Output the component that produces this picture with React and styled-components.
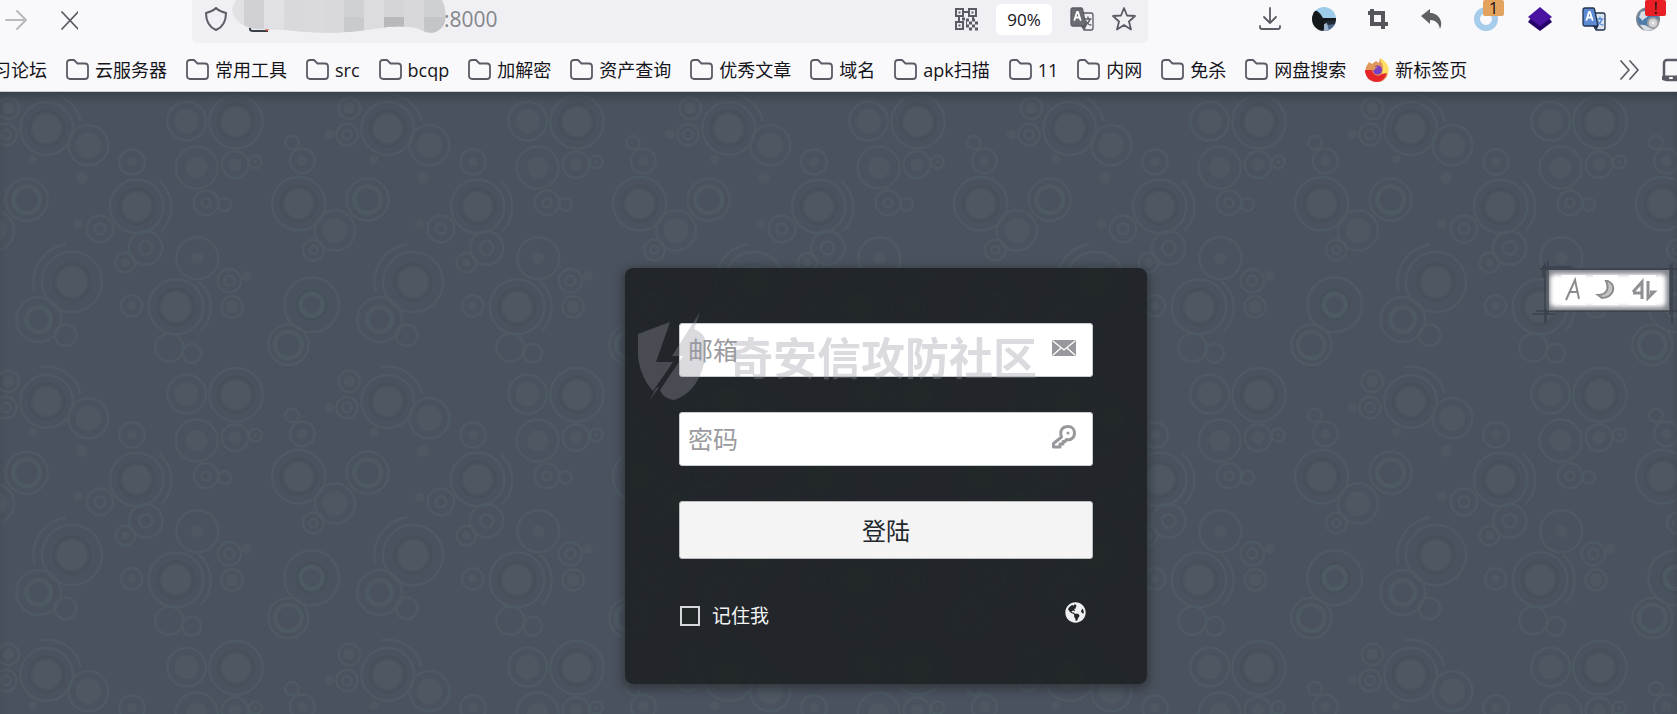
import React from "react";
import styled, { createGlobalStyle } from "styled-components";
import { FaGlobeAmericas } from "react-icons/fa";

const Global = createGlobalStyle`
  *{box-sizing:border-box}
  body{margin:0;font-family:"Open Sans","Noto Sans CJK SC",sans-serif;background:#48515d}
  button,input{font-family:inherit}
  button{padding:0;border:0;background:none;cursor:pointer}
`;

const Window = styled.div`
  min-height: 100vh;
  display: flex;
  flex-direction: column;
  overflow: hidden;
  border-bottom: 1px solid #14161c;
`;
const Chrome = styled.header`
  background: #f9f9fb;
  border-bottom: 1px solid #c9ced3;
  position: relative;
`;
const Toolbar = styled.div`
  display: flex;
  align-items: flex-start;
  padding-right: 17px;
`;
const NavGroup = styled.div`
  display: flex;
  align-items: center;
  gap: 26px;
  height: 40px;
  width: 192px;
  padding-left: 4px;
  flex: none;
`;
const IconButton = styled.button`
  position: relative;
  display: flex;
  flex: none;
  width: 24px;
  height: 24px;
  svg { display: block; }
`;
const AddressBar = styled.div`
  flex: 1;
  min-width: 0;
  display: flex;
  align-items: center;
  height: 43px;
  padding: 0 12px 5px;
  background: #f0f0f4;
  border-radius: 0 0 5px 5px;
`;
const Mosaic = styled.svg`
  flex: none;
  margin-left: 4px;
`;
const AddressInput = styled.input`
  flex: 1;
  min-width: 0;
  margin-left: -3px;
  padding: 0;
  border: 0;
  outline: 0;
  background: none;
  font-size: 21px;
  line-height: 28px;
  color: #85858b;
`;
const AddressActions = styled.div`
  display: flex;
  align-items: center;
  gap: 18px;
`;
const Zoom = styled.button`
  width: 56px;
  height: 31px;
  border-radius: 5px;
  background: #fff;
  font-size: 17px;
  color: #15141a;
`;
const Extensions = styled.div`
  display: flex;
  align-items: center;
  gap: 30px;
  height: 38px;
  margin-left: 110px;
`;
const Badge = styled.span`
  position: absolute;
  left: 9px;
  top: -7px;
  width: 21px;
  height: 16px;
  border-radius: 2px;
  background: ${(p) => p.$color};
  color: #111;
  font-size: 16px;
  line-height: 16px;
  text-align: center;
`;
const Bookmarks = styled.nav`
  display: flex;
  align-items: center;
  height: 48px;
  padding-top: 6px;
`;
const BookmarkList = styled.div`
  display: flex;
  flex: 1;
  min-width: 0;
  gap: 19px;
  overflow: hidden;
  margin-left: -36px;
`;
const Bookmark = styled.a`
  display: flex;
  align-items: center;
  gap: 6px;
  flex: none;
  font-size: 18px;
  line-height: 28px;
  color: #15141a;
  text-decoration: none;
  white-space: nowrap;
`;
const Overflow = styled.div`
  display: flex;
  gap: 20px;
  flex: none;
  margin-right: -9px;
`;

const Page = styled.main`
  position: relative;
  flex: 1;
  display: flex;
  justify-content: center;
  align-items: flex-start;
  padding: 176px 0 30px 95px;
  box-shadow: inset 0 8px 8px -4px #363e49;
`;
const Backdrop = styled.svg`
  position: absolute;
  inset: 0;
  width: 100%;
  height: 100%;
  z-index: -1;
`;
const Card = styled.form`
  position: relative;
  width: 522px;
  display: flex;
  flex-direction: column;
  padding: 55px 54px 56px;
  border-radius: 8px;
  background: rgba(27, 31, 33, 0.85);
  box-shadow: 0 3px 10px 2px rgba(45, 47, 50, 0.75);
`;
const Field = styled.label`
  display: flex;
  align-items: center;
  height: 54px;
  margin-bottom: 35px;
  padding: 0 16px 4px 8px;
  background: #fff;
  border: 1px solid #c9cdd0;
  border-radius: 3px;
`;
const FieldInput = styled.input`
  flex: 1;
  min-width: 0;
  padding: 4px 0 0;
  border: 0;
  outline: 0;
  background: none;
  font-size: 25px;
  line-height: 36px;
  color: #333;
  &::placeholder { color: #9b9b9f; opacity: 1; }
`;
const Submit = styled.button`
  height: 58px;
  padding-bottom: 2px;
  border: 1px solid #b9bcbe;
  border-radius: 3px;
  background: #f4f4f5;
  font-size: 24px;
  color: #23282c;
`;
const Footer = styled.div`
  display: flex;
  justify-content: space-between;
  align-items: center;
  margin-top: 39px;
  padding: 0 7px 0 1px;
`;
const Remember = styled.label`
  display: flex;
  align-items: center;
  gap: 12px;
  padding-top: 6px;
  font-size: 19px;
  line-height: 24px;
  color: #f5f5f6;
`;
const Checkbox = styled.input`
  appearance: none;
  width: 20px;
  height: 20px;
  margin: 0;
  border: 2px solid #d6d7da;
  background: #22272a;
`;
const Language = styled.button`
  display: flex;
  padding-bottom: 2px;
  font-size: 21px;
  color: #f0f0f3;
`;
const Watermark = styled.div`
  position: absolute;
  left: 12px;
  top: 44px;
  display: flex;
  align-items: center;
  gap: 22px;
  pointer-events: none;
  color: #9494a2;
  opacity: 0.34;
  font: 700 44px/88px "Noto Sans CJK SC", sans-serif;
  white-space: nowrap;
`;
const ImeBar = styled.svg`
  position: absolute;
  right: 2px;
  top: 169px;
  overflow: visible;
`;

const Icon = ({ children, box = "0 0 24 24", w = 24, h = 24 }) => (
  <svg width={w} height={h} viewBox={box} fill="none" stroke="#5b5b66" strokeWidth="2" strokeLinecap="round" strokeLinejoin="round" aria-hidden="true">
    {children}
  </svg>
);
const Folder = () => (
  <Icon w={23} h={22} box="0 0 23 22">
    <path d="M1 17V4a3 3 0 0 1 3-3h4l3.500 3.500H19a3 3 0 0 1 3 3V17a3 3 0 0 1-3 3H4a3 3 0 0 1-3-3Z" strokeWidth="1.800" />
  </Icon>
);
const Firefox = () => (
  <svg width="24" height="24" viewBox="0 0 24 24" aria-hidden="true">
    <path d="M1 9 4 4l3 2 4-3 3 2 1-5 6 6c5 8 1 18-9 18C4 24-1 18 1 9Z" fill="#e0985a" />
    <path d="M15 0c0 4 3 5 3 10l-1 6 5 1c4-7 0-13-7-17Z" fill="#ffdf63" />
    <path d="M0 12h7c1 6 7 7 10 4l5-1c-2 6-6 9-10 9C5 24 0 19 0 12Z" fill="#e5252a" />
    <circle cx="12.500" cy="12" r="4.600" fill="#7b3fc4" />
    <path d="M6 9c3-1 5 0 7 0-2 1-4 2-4 4Z" fill="#e0985a" />
  </svg>
);
const Translate = ({ front = "#6b6c72", back = "#fff", line = "#5b5b66", glyph = line }) => (
  <Icon>
    <path d="M13 6h8q2 0 2 2v13q0 2-2 2h-7l-3-5Z" fill={back} stroke={line} strokeWidth="1.300" />
    <path d="M15 12h6m-3-2v2m2 0c-1 4-3 5-5 6m1-4c1 2 3 4 5 4" stroke={glyph} strokeWidth="1.300" />
    <path d="M3 1h8q1 0 1.500 1L16 19H3q-2 0-2-2V3q0-2 2-2Z" fill={front} stroke={line} strokeWidth="1.300" />
    <path d="m4.500 13 2.500-8h1l2.500 8M6 10.500h3.500" stroke="#fff" strokeWidth="1.800" />
    <path d="m11 19 4 4 1-4Z" fill={line} stroke="none" />
  </Icon>
);
const Qr = () => (
  <Icon>
    <g strokeLinejoin="miter" strokeLinecap="butt">
      <path d="M2 2h7v7H2ZM15 2h7v7h-7ZM2 15h7v7H2Z" />
      <path d="M4.500 5.500h2M17.500 5.500h2M4.500 18.500h2M9 5h6M5 9v6M19 9v4" />
      <path d="M12 13h3m3 0h3M15 16h3m3 0h3M12 19h3m3 0h3M15 22h3m3 0h3M12 16h1M8 12h3" strokeWidth="3" />
    </g>
  </Icon>
);
const Envelope = () => (
  <svg width="24" height="16" viewBox="0 0 24 16" aria-hidden="true">
    <rect width="24" height="16" rx="1.500" fill="#98989c" />
    <path d="m1 1 11 9L23 1M1 15l8-7m14 7-8-7" fill="none" stroke="#fff" strokeWidth="1.300" />
  </svg>
);
const Key = () => (
  <svg width="24" height="24" viewBox="0 0 24 24" fill="none" stroke="#98989c" strokeWidth="3" strokeLinejoin="round" aria-hidden="true">
    <path d="M9.500 12C7 5 11 1.500 16 1.500c4 0 6.500 3 6.500 6.500 0 5-4 7.500-8 6.500l-1.500 2h-2V19H8v3H1.500v-3.500Z" />
    <circle cx="16" cy="8" r="1.500" fill="#98989c" stroke="none" />
  </svg>
);

/* Rings: x, y, outer ring, core radius, core kind (f filled, o open), optional arc */
const BUBBLES = [
  [140, 115, 79, 43, "f", "tr"], [265, 165, 60, 38, "f"], [25, 55, 32, 17, "f"], [18, 133, 32, 14, "o"],
  [98, 207, 0, 13, "f"], [246, 263, 0, 18, "f"], [396, 215, 38, 14, "f"], [560, 93, 58, 36, "f"],
  [708, 95, 80, 43, "f"], [590, 232, 63, 32, "f"], [705, 223, 40, 19, "f"], [766, 215, 19, 6, "f"],
  [618, 337, 37, 13, "o"], [674, 342, 19, 0], [876, 157, 20, 0], [907, 212, 37, 15, "f"],
  [896, 340, 80, 43, "f"], [1005, 420, 60, 37, "f"], [940, 478, 31, 12, "o"], [80, 328, 63, 40, "o"],
  [410, 348, 80, 43, "f", "r"], [300, 415, 40, 16, "o"], [235, 400, 0, 14, "f"], [437, 472, 50, 20, "o"],
  [376, 516, 29, 12, "f"], [592, 503, 63, 18, "f"], [688, 570, 35, 15, "o"], [740, 556, 0, 15, "f"],
  [216, 574, 90, 45, "f", "l"], [116, 686, 67, 37, "o"], [197, 733, 32, 0], [395, 645, 32, 12, "f"],
  [528, 648, 82, 44, "f", "r"], [696, 648, 32, 19, "f"], [508, 770, 42, 0], [575, 787, 28, 0],
  [935, 642, 82, 33, "o"], [865, 762, 60, 40, "o"], [988, 133, 0, 14, "f"],
];
const ARCS = {
  tr: "M-20-102A104 104 0 0 1 102-22",
  r: "M68-76A102 102 0 0 1 74 74",
  l: "M-113 28A116 116 0 0 1-18-113",
};
const Bubbles = () =>
  BUBBLES.map(([x, y, ring, core, kind, arc]) => (
    <g key={`${x}-${y}`} transform={`translate(${x} ${y})`} fill="none" stroke="#4d5963" strokeWidth="7">
      {ring > 0 && <circle r={ring} />}
      {ring > 70 && <circle r={core + 10} stroke="#46505b" strokeWidth="9" />}
      {kind === "f" && <circle r={core} fill="#4d5862" stroke="none" />}
      {kind === "o" && <circle r={core} strokeWidth={core > 30 ? 13 : 7} />}
      {arc && <path d={ARCS[arc]} />}
    </g>
  ));
const PatternBackdrop = () => (
  <Backdrop aria-hidden="true">
    <defs>
      <g id="bubbles"><Bubbles /></g>
      <pattern id="tile" width="341" height="273" y="-2" patternUnits="userSpaceOnUse" viewBox="0 0 1023 816" preserveAspectRatio="none">
        {[-1023, 0, 1023].map((x) => [-816, 0, 816].map((y) => <use key={`${x},${y}`} href="#bubbles" x={x} y={y} />))}
      </pattern>
    </defs>
    <rect width="100%" height="100%" fill="#49525e" />
    <rect width="100%" height="100%" fill="url(#tile)" />
  </Backdrop>
);

const FOLDERS = ["云服务器", "常用工具", "src", "bcqp", "加解密", "资产查询", "优秀文章", "域名", "apk扫描", "11", "内网", "免杀", "网盘搜索"];
const BLOCKS = [
  [12, 0, 20, 30, "#d1d1d5"], [32, 0, 20, 17, "#e2e2e5"], [52, 0, 20, 34, "#d9d9dc"], [72, 0, 20, 34, "#dadadd"],
  [92, 0, 20, 34, "#d9d9dc"], [112, 0, 20, 17, "#d0d1d4"], [112, 17, 20, 17, "#c9cacd"], [132, 0, 20, 34, "#dcdcdf"],
  [152, 0, 20, 17, "#d5d5d9"], [152, 17, 20, 17, "#b9b9bd"], [172, 0, 20, 34, "#d8d8dc"], [192, 0, 22, 17, "#cfd0d2"], [192, 17, 22, 17, "#c4c5c8"],
];

export default function App() {
  return (
    <Window>
      <Global />
      <Chrome>
        <Toolbar>
          <NavGroup>
            <IconButton aria-label="前进"><Icon><path d="M2 12h20m-9-9 9 9-9 9" stroke="#b9b9be" /></Icon></IconButton>
            <IconButton aria-label="停止"><Icon><path d="m8 4 16 17M24 4 8 21" strokeWidth="1.800" /></Icon></IconButton>
          </NavGroup>
          <AddressBar>
            <IconButton aria-label="保护"><Icon><path d="M12 1c3 3 6 4 10 5 0 7-3 14-10 17C5 20 2 13 2 6c4-1 7-2 10-5Z" /></Icon></IconButton>
            <Mosaic width="215" height="38" viewBox="0 0 215 38" aria-hidden="true">
              <clipPath id="blob"><path d="M4 0h206c4 8 5 20 1 26-7 9-15 8-24 3-22-6-46 1-60 2-25 3-48 2-72-1l-30-1C10 28 0 18 0 9Z" /></clipPath>
              <path d="M18 26v3q0 2 3 2h15" fill="none" stroke="#3b3f48" strokeWidth="2" />
              <circle cx="35" cy="29" r="2" fill="#dc5b3c" />
              <g clipPath="url(#blob)">
                <path d="M0 0h215v38H0Z" fill="#e1e1e5" />
                {BLOCKS.map(([x, y, w, h, c]) => <rect key={`${x}-${y}`} x={x} y={y} width={w} height={h} fill={c} />)}
              </g>
            </Mosaic>
            <AddressInput aria-label="地址" defaultValue=":8000" />
            <AddressActions>
              <IconButton aria-label="二维码"><Qr /></IconButton>
              <Zoom>90%</Zoom>
              <IconButton aria-label="翻译"><Translate back="#f0f0f4" /></IconButton>
              <IconButton aria-label="收藏"><Icon><path d="m12 1 3 7.500 8 .5-6 5.500 2 8-7-4.500-7 4.500 2-8L1 9l8-.5Z" strokeWidth="1.800" /></Icon></IconButton>
            </AddressActions>
          </AddressBar>
          <Extensions>
            <IconButton aria-label="下载"><Icon><path d="M12 1v15m-6-6 6 6 6-6M2 19v1q0 2 2 2h16q2 0 2-2v-1" strokeWidth="1.800" /></Icon></IconButton>
            <IconButton aria-label="风景">
              <svg width="24" height="24" viewBox="0 0 24 24" aria-hidden="true">
                <clipPath id="round"><circle cx="12" cy="12" r="12" /></clipPath>
                <g clipPath="url(#round)">
                  <path d="M0 0h24v24H0Z" fill="#9ecbea" />
                  <path d="M0 4c5-2 8 2 11 7l13 0v3l-9 3-3 7H0Z" fill="#15191c" />
                  <path d="M14 16h10v8H11Z" fill="#4d6788" />
                  <path d="m13 14 11-1v4l-9 1Z" fill="#202a32" />
                  <path d="m12 17 3-1 2 8h-5Z" fill="#9db5cc" />
                </g>
              </svg>
            </IconButton>
            <IconButton aria-label="截图"><Icon><path d="M6 2v15h16M2 6h15v16" strokeWidth="4" strokeLinecap="butt" strokeLinejoin="miter" stroke="#55565b" /></Icon></IconButton>
            <IconButton aria-label="撤销"><Icon><path d="M1 9 10 2v4c8 0 14 8 10 16-1-6-5-9-10-9v4Z" fill="#5f6064" stroke="none" /></Icon></IconButton>
            <IconButton aria-label="请求">
              <Icon><circle cx="12" cy="12" r="9" stroke="#a5cdeb" strokeWidth="6" /></Icon>
              <Badge $color="#e3a35f">1</Badge>
            </IconButton>
            <IconButton aria-label="图层">
              <Icon><path d="m0 15 3-4h18l3 4-12 9Z" fill="#25036b" stroke="none" /><path d="m12 0 12 10-12 9L0 10Z" fill="#4a14a0" stroke="none" /></Icon>
            </IconButton>
            <IconButton aria-label="网页翻译"><Translate front="#5c8bd3" back="#dce4ee" line="#22324d" glyph="#5a8fd8" /></IconButton>
            <IconButton aria-label="代理">
              <Icon>
                <circle cx="12" cy="12" r="11" fill="#4f7ca9" stroke="#7d8791" />
                <path d="M5 5c4-2 8-1 7 3s-5 3-5 6l-4-4ZM4 18c7-1 8 3 14 5l-9 1Z" fill="#d8dee4" stroke="none" />
                <circle cx="17" cy="16" r="5" fill="#d5d5d8" stroke="#a2a4a8" />
                <circle cx="17" cy="16" r="1" fill="#fff" stroke="none" />
              </Icon>
              <Badge $color="#e81f25">!</Badge>
            </IconButton>
          </Extensions>
        </Toolbar>
        <Bookmarks>
          <BookmarkList>
            <Bookmark href="#"><Folder />习论坛</Bookmark>
            {FOLDERS.map((f) => <Bookmark href="#" key={f}><Folder />{f}</Bookmark>)}
            <Bookmark href="#"><Firefox />新标签页</Bookmark>
          </BookmarkList>
          <Overflow>
            <IconButton aria-label="更多书签"><Icon><path d="m3 3 8 9-8 9m9-18 8 9-8 9" strokeWidth="1.700" /></Icon></IconButton>
            <IconButton aria-label="移动设备书签"><Icon><rect x="2" y="2" width="30" height="20" rx="3" strokeWidth="2.500" /><path d="M2 20h28" strokeWidth="5" /><path d="M8 20h2" stroke="#fff" /></Icon></IconButton>
          </Overflow>
        </Bookmarks>
      </Chrome>
      <Page>
        <PatternBackdrop />
        <Card onSubmit={(e) => e.preventDefault()}>
          <Field><FieldInput type="email" aria-label="邮箱" placeholder="邮箱" /><Envelope /></Field>
          <Field><FieldInput type="password" aria-label="密码" placeholder="密码" /><Key /></Field>
          <Submit type="submit">登陆</Submit>
          <Footer>
            <Remember><Checkbox type="checkbox" />记住我</Remember>
            <Language type="button" aria-label="语言"><FaGlobeAmericas /></Language>
          </Footer>
          <Watermark>
            <svg width="70" height="88" viewBox="0 0 70 88" fill="currentColor" aria-hidden="true">
              <path d="M1 22 33 10 19 50h17L16 79C6 68 0 52 1 36Z" />
              <path d="M63 0 57 17c8 3 12 8 12 17 0 26-12 48-32 54-8-1-13-6-14-10L46 44H35Z" />
              <path d="m19 76-6 12 9-13Z" />
            </svg>
            奇安信攻防社区
          </Watermark>
        </Card>
        <ImeBar width="135" height="64" viewBox="0 0 135 64" aria-hidden="true">
          <defs><filter id="soft"><feGaussianBlur stdDeviation="2" /></filter></defs>
          <rect x="7" y="9" width="123" height="41" fill="#85888f" />
          <rect x="10" y="13" width="116" height="33" rx="5" fill="#fff" filter="url(#soft)" />
          <path d="M22 14h24v30H22ZM53 14h25v30H53ZM89 14h27v30H89Z" fill="#fff" />
          <path d="M0 8h137M2 6h30M-4 50h141M5 2v60M8 0v52M3 4v12M130 4v50M132 2v60M-8 53h22M6 48v12" stroke="#373c46" strokeWidth="1.500" opacity=".8" />
          <path d="m26 39 9-20 4 19M30 31h8" stroke="#8a8b8e" strokeWidth="2" fill="none" />
          <path d="M68 20c9 5 6 16-6 17l-4-3c8 0 12-6 8-14Z" fill="#c4c4c5" stroke="#8a8b8e" strokeWidth="2" />
          <path d="m93 31 9-10v17M93 32h9M108 20v17l6-6h-4" fill="none" stroke="#8f9093" strokeWidth="3" />
        </ImeBar>
      </Page>
    </Window>
  );
}
